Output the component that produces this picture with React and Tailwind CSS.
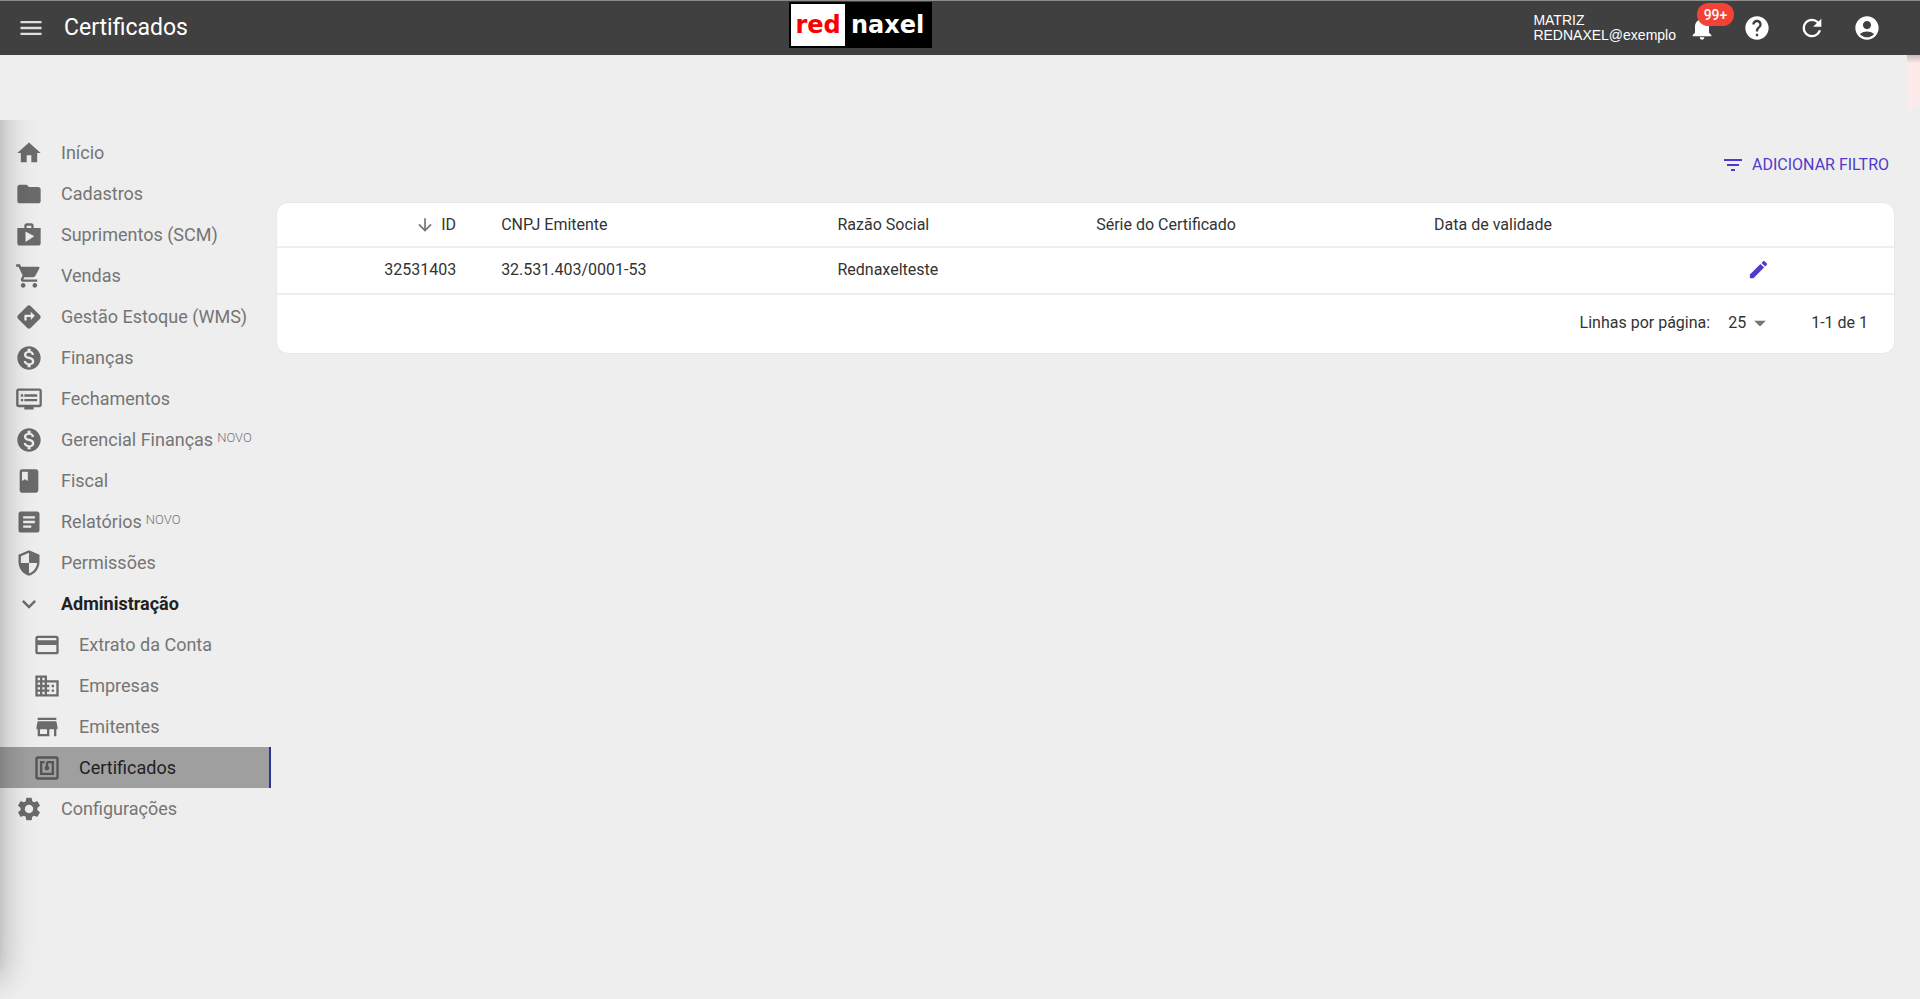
import clsx from "clsx";
import { useState } from "react";
import {
  MdAccountCircle,
  MdArrowDownward,
  MdArrowDropDown,
  MdArticle,
  MdBook,
  MdBusiness,
  MdCreditCard,
  MdDirections,
  MdDvr,
  MdEdit,
  MdExpandMore,
  MdFilterList,
  MdFolder,
  MdHelp,
  MdHome,
  MdMenu,
  MdMonetizationOn,
  MdNfc,
  MdNotifications,
  MdRefresh,
  MdSecurity,
  MdSettings,
  MdShop,
  MdShoppingCart,
  MdStore,
} from "react-icons/md";

const menu = [
  { label: "Início", icon: MdHome },
  { label: "Cadastros", icon: MdFolder },
  { label: "Suprimentos (SCM)", icon: MdShop },
  { label: "Vendas", icon: MdShoppingCart },
  { label: "Gestão Estoque (WMS)", icon: MdDirections },
  { label: "Finanças", icon: MdMonetizationOn },
  { label: "Fechamentos", icon: MdDvr },
  { label: "Gerencial Finanças", icon: MdMonetizationOn, novo: true },
  { label: "Fiscal", icon: MdBook },
  { label: "Relatórios", icon: MdArticle, novo: true },
  { label: "Permissões", icon: MdSecurity },
  {
    label: "Administração",
    icon: MdExpandMore,
    children: [
      { label: "Extrato da Conta", icon: MdCreditCard },
      { label: "Empresas", icon: MdBusiness },
      { label: "Emitentes", icon: MdStore },
      { label: "Certificados", icon: MdNfc, active: true },
    ],
  },
  { label: "Configurações", icon: MdSettings },
];

const certificados = [
  {
    id: "32531403",
    cnpj: "32.531.403/0001-53",
    razaoSocial: "Rednaxelteste",
    serie: "",
    validade: "",
  },
];

const MenuItem = ({ item, nested }) => {
  const Icon = item.icon;

  return (
    <li>
      <a
        href="#"
        className={clsx(
          "flex h-[41px] items-center text-lg",
          nested ? "pl-[33px]" : "pl-[15px]",
          item.active && "border-r-2 border-[#283593] bg-[#9f9f9f]",
          item.active || item.children ? "text-[#212121]" : "text-[#757575]",
          item.children && "font-bold",
        )}
      >
        <Icon
          className={clsx(
            "mr-[18px] size-7 shrink-0",
            item.active ? "text-[#555]" : "text-[#6b6b6b]",
          )}
        />
        <span className="whitespace-nowrap">
          {item.label}
          {item.novo && (
            <sup className="-top-1 ml-1 align-baseline text-[13px] font-light">
              NOVO
            </sup>
          )}
        </span>
      </a>
      {item.children && (
        <ul>
          {item.children.map((child) => (
            <MenuItem key={child.label} item={child} nested />
          ))}
        </ul>
      )}
    </li>
  );
};

const Header = () => (
  <header className="flex h-[55px] items-center justify-between border-t border-[#8c8c8c] bg-[#404040] text-white">
    <div className="flex items-center gap-[19px] pl-[17px]">
      <button type="button" aria-label="Menu">
        <MdMenu className="size-7 text-[#dedede]" />
      </button>
      <h1 className="text-[23px] leading-7">Certificados</h1>
    </div>

    <a
      href="#"
      className="mt-px flex h-[46px] w-[143px] items-center self-start border-2 border-black bg-black font-['DejaVu_Sans',sans-serif] text-2xl font-bold"
    >
      <span className="flex h-full w-[54px] items-center justify-center bg-white text-[#fa0000]">
        red
      </span>
      <span className="flex-1 text-center">naxel</span>
    </a>

    <div className="flex items-center justify-end pr-[39px]">
      <div className="mr-3 font-['Liberation_Sans',Arial,sans-serif] text-sm leading-[15px]">
        <p>MATRIZ</p>
        <p>REDNAXEL@exemplo</p>
      </div>
      <div className="flex items-center gap-[27px]">
        <button type="button" aria-label="Notificações" className="relative">
          <MdNotifications className="size-7" />
          <span className="absolute -top-[11px] left-[9px] flex h-[23px] w-[37px] items-center justify-center rounded-full bg-[#f44336] text-sm font-medium">
            99+
          </span>
        </button>
        <button type="button" aria-label="Ajuda">
          <MdHelp className="size-7" />
        </button>
        <button type="button" aria-label="Atualizar">
          <MdRefresh className="size-7" />
        </button>
        <button type="button" aria-label="Conta">
          <MdAccountCircle className="size-7" />
        </button>
      </div>
    </div>
  </header>
);

const Tabela = () => {
  const [linhas, setLinhas] = useState("25");

  return (
    <div className="overflow-hidden rounded-xl border border-[#e8e8e8] bg-white text-base text-[#333]">
      <table className="w-full table-fixed text-left">
        <colgroup>
          <col className="w-[12.5%]" />
          <col className="w-[20.8%]" />
          <col className="w-[16%]" />
          <col className="w-[20.9%]" />
          <col className="w-[18%]" />
          <col />
        </colgroup>
        <thead>
          <tr className="h-11 border-b-2 border-[#eee]">
            <th className="pr-[23px] font-normal">
              <span className="flex items-center justify-end gap-[6px]">
                <MdArrowDownward className="size-5 text-[#757575]" />
                ID
              </span>
            </th>
            <th className="pl-[22px] font-normal">CNPJ Emitente</th>
            <th className="pl-[22px] font-normal">Razão Social</th>
            <th className="pl-[22px] font-normal">Série do Certificado</th>
            <th className="pl-[22px] font-normal">Data de validade</th>
            <td />
          </tr>
        </thead>
        <tbody>
          {certificados.map((c) => (
            <tr key={c.id} className="h-[47px] border-b-2 border-[#eee]">
              <td className="pr-[23px] pb-[2px] text-right">{c.id}</td>
              <td className="pb-[2px] pl-[22px]">{c.cnpj}</td>
              <td className="pb-[2px] pl-[22px]">{c.razaoSocial}</td>
              <td className="pl-[22px]">{c.serie}</td>
              <td className="pl-[22px]">{c.validade}</td>
              <td className="pb-[2px] pl-11">
                <button type="button" aria-label="Editar" className="block">
                  <MdEdit className="size-[23px] text-[#503acb]" />
                </button>
              </td>
            </tr>
          ))}
        </tbody>
      </table>

      <div className="flex h-[58px] items-center justify-end pr-[26px] pb-[2px]">
        <label htmlFor="linhas">Linhas por página:</label>
        <div className="relative ml-[18px] flex items-center">
          <select
            id="linhas"
            value={linhas}
            onChange={(e) => setLinhas(e.target.value)}
            className="w-[42px] appearance-none bg-transparent"
          >
            <option>25</option>
            <option>50</option>
            <option>100</option>
          </select>
          <MdArrowDropDown className="pointer-events-none absolute -right-1 size-7 text-[#757575]" />
        </div>
        <span className="ml-[41px]">1-1 de 1</span>
      </div>
    </div>
  );
};

const App = () => {
  return (
    <div className="relative min-h-screen overflow-hidden bg-[#eee] font-['Roboto',sans-serif]">
      <Header />

      {/* Aviso recolhido na lateral */}
      <div className="absolute top-[55px] right-0 h-[55px] w-[13px] rounded-br-xl bg-linear-to-b from-[#c9bcbc] to-[#fdeaea] to-15%" />

      <div className="flex pt-[77px]">
        <nav className="w-[271px] shrink-0">
          <ul>
            {menu.map((item) => (
              <MenuItem key={item.label} item={item} />
            ))}
          </ul>
        </nav>

        <main className="min-w-0 flex-1 pr-[25px] pl-[5px]">
          <div className="flex h-[70px] justify-end pt-5 pr-[6px]">
            <button
              type="button"
              className="flex h-[26px] items-center gap-[7px] text-base text-[#503acb]"
            >
              <MdFilterList className="size-6" />
              ADICIONAR FILTRO
            </button>
          </div>
          <Tabela />
        </main>
      </div>

      {/* Sombra da gaveta fechada */}
      <div className="pointer-events-none absolute top-[120px] bottom-0 left-0 w-16 overflow-hidden">
        <div className="absolute -top-24 right-full bottom-9 w-64 shadow-[0_9px_12px_-6px_rgba(0,0,0,0.2),0_18px_27px_2px_rgba(0,0,0,0.14),0_7px_34px_6px_rgba(0,0,0,0.12)]" />
      </div>
    </div>
  );
};

export default App;
